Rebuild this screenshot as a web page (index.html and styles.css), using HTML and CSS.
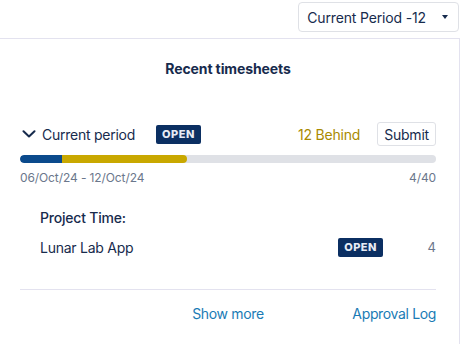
FILE: index.html
```html
<!DOCTYPE html>
<html>
<head>
<meta charset="utf-8">
<link rel="stylesheet" href="styles.css">
</head>
<body>
<div class="topbar">
  <button class="period-select">Current Period -12 <span class="caret"></span></button>
</div>
<div class="card">
  <h2 class="title">Recent timesheets</h2>
  <div class="period-row">
    <div class="period-left">
      <svg class="chev" width="14" height="8" viewBox="0 0 14 8"><path d="M1.5 1.2 L7 6.5 L12.5 1.2" fill="none" stroke="#172b4d" stroke-width="2" stroke-linecap="round" stroke-linejoin="round"/></svg>
      <span class="period-label">Current period</span>
      <span class="badge">OPEN</span>
    </div>
    <div class="period-right">
      <span class="behind">12 Behind</span>
      <button class="submit">Submit</button>
    </div>
  </div>
  <div class="bar">
    <div class="seg seg-blue" style="width:42px"></div>
    <div class="seg seg-gold" style="width:125px"></div>
  </div>
  <div class="dates">
    <span>06/Oct/24 - 12/Oct/24</span>
    <span>4/40</span>
  </div>
  <div class="project">
    <div class="project-head">Project Time:</div>
    <div class="project-row">
      <span class="project-name">Lunar Lab App</span>
      <span class="badge">OPEN</span>
      <span class="count">4</span>
    </div>
  </div>
  <div class="divider"></div>
  <div class="links">
    <span></span>
    <a class="link">Show more</a>
    <a class="link right">Approval Log</a>
  </div>
</div>
</body>
</html>
```

FILE: styles.css
```css
html, body {
  margin: 0;
  padding: 0;
  background: #fff;
  font-family: Inter, "Noto Sans", sans-serif;
  color: #172b4d;
}
.topbar {
  display: flex;
  justify-content: flex-end;
  padding: 2px 3px 0 0;
}
.period-select {
  display: flex;
  align-items: center;
  height: 30px;
  padding: 0 10px 0 8px;
  border: 1px solid #dfe1e6;
  border-radius: 4px;
  background: #fff;
  font-family: inherit;
  font-size: 14px;
  letter-spacing: -0.15px;
  color: #172b4d;
}
.caret {
  margin-left: 16px;
  width: 0;
  height: 0;
  border-left: 3px solid transparent;
  border-right: 3px solid transparent;
  border-top: 4px solid #172b4d;
}
.card {
  margin-top: 6px;
  width: 460px;
  border-top: 1px solid #e3e2ef;
  border-right: 1px solid #e3e2ef;
  padding: 22px 23px 20px 20px;
  box-sizing: border-box;
  height: 306px;
}
.title {
  margin: 0;
  text-align: center;
  font-size: 14px;
  font-weight: 700;
  line-height: 16px;
  letter-spacing: -0.1px;
}
.period-row {
  display: flex;
  justify-content: space-between;
  align-items: center;
  margin-top: 45px;
  height: 24px;
}
.period-left, .period-right {
  display: flex;
  align-items: center;
}
.chev { margin-left: 2px; margin-right: 6px; }
.period-label { font-size: 14px; letter-spacing: -0.25px; }
.badge {
  display: inline-block;
  background: #0b2f62;
  color: #e6ebf5;
  font-size: 11px;
  font-weight: 800;
  letter-spacing: 0.5px;
  line-height: 19px;
  height: 19px;
  padding: 0 6px;
  border-radius: 2px;
}
.period-left .badge { margin-left: 21px; }
.behind {
  color: #a98a00;
  font-size: 14px;
  letter-spacing: -0.2px;
  margin-right: 17px;
}
.submit {
  height: 24px;
  padding: 0 6px;
  border: 1px solid #dfe1e6;
  border-radius: 3px;
  background: #fff;
  font-family: inherit;
  font-size: 14px;
  letter-spacing: -0.2px;
  color: #172b4d;
}
.bar {
  display: flex;
  margin-top: 9px;
  height: 8px;
  border-radius: 4px;
  background: #dfe1e6;
  overflow: hidden;
}
.seg-blue { background: #0b4a8c; border-radius: 4px 0 0 4px; }
.seg-gold { background: #c9a800; border-radius: 0 4px 4px 0; }
.dates {
  display: flex;
  justify-content: space-between;
  margin-top: 7px;
  font-size: 12px;
  line-height: 16px;
  letter-spacing: -0.1px;
  color: #6b778c;
}
.project {
  padding-left: 20px;
  margin-top: 24px;
}
.project-head {
  font-size: 14px;
  font-weight: 500;
  line-height: 16px;
  letter-spacing: -0.2px;
}
.project-row {
  display: flex;
  align-items: center;
  margin-top: 11px;
  height: 20px;
}
.project-name { font-size: 14px; letter-spacing: -0.25px; flex: 1; }
.count {
  width: 53px;
  text-align: right;
  font-size: 13px;
  color: #6b778c;
}
.divider {
  margin-top: 32px;
  height: 1px;
  background: #e3e2ef;
}
.links {
  display: grid;
  grid-template-columns: 1fr auto 1fr;
  margin-top: 15px;
  font-size: 14px;
  line-height: 18px;
  letter-spacing: -0.35px;
}
.link { color: #1a7bb5; }
.link.right { text-align: right; }
```
